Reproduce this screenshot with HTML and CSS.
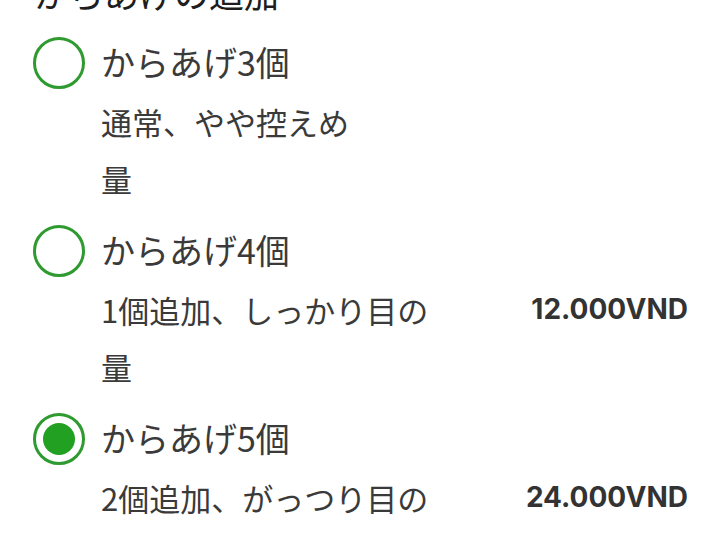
FILE: index.html
```html
<!DOCTYPE html>
<html lang="ja">
<head>
<meta charset="utf-8">
<link rel="stylesheet" href="styles.css">
</head>
<body>
<div class="page">
  <h2 class="section-title">からあげの追加</h2>
  <ul class="options">
    <li class="option">
      <span class="radio"></span>
      <div class="body">
        <div class="title">からあげ3個</div>
        <div class="row">
          <div class="desc">通常、やや控えめ<br>量</div>
          <div class="price"></div>
        </div>
      </div>
    </li>
    <li class="option">
      <span class="radio"></span>
      <div class="body">
        <div class="title">からあげ4個</div>
        <div class="row">
          <div class="desc">1個追加、しっかり目の<br>量</div>
          <div class="price">12.000VND</div>
        </div>
      </div>
    </li>
    <li class="option">
      <span class="radio checked"></span>
      <div class="body">
        <div class="title">からあげ5個</div>
        <div class="row">
          <div class="desc">2個追加、がっつり目の<br>量</div>
          <div class="price">24.000VND</div>
        </div>
      </div>
    </li>
  </ul>
</div>
</body>
</html>
```

FILE: styles.css
```css
html, body {
  margin: 0;
  padding: 0;
  background: #ffffff;
  overflow: hidden;
}
.page {
  font-family: "Noto Sans CJK JP", "Noto Sans", sans-serif;
  color: #3a3a3a;
  padding: 0 34px 0 33px;
}
.section-title {
  margin: -27px 0 0 1px;
  font-size: 35px;
  line-height: 40px;
  font-weight: 400;
  color: #1e1e1e;
}
.options {
  list-style: none;
  margin: 17px 0 0 0;
  padding: 0;
  display: flex;
  flex-direction: column;
  gap: 11px;
}
.option {
  display: flex;
  align-items: flex-start;
  gap: 16px;
}
.radio {
  flex: none;
  box-sizing: border-box;
  width: 52px;
  height: 52px;
  margin-top: 7px;
  border: 3.5px solid #2f9a2f;
  border-radius: 50%;
  display: flex;
  align-items: center;
  justify-content: center;
}
.radio.checked::after {
  content: "";
  width: 32px;
  height: 32px;
  border-radius: 50%;
  background: #22a022;
}
.body {
  flex: 1;
  min-width: 0;
}
.title {
  font-size: 34px;
  line-height: 63px;
}
.row {
  display: flex;
  align-items: flex-start;
  justify-content: space-between;
}
.desc {
  font-size: 31px;
  line-height: 57px;
}
.price {
  font-family: "Inter", "Liberation Sans", sans-serif;
  font-weight: 700;
  font-size: 28px;
  line-height: 57px;
  color: #333333;
}
```
